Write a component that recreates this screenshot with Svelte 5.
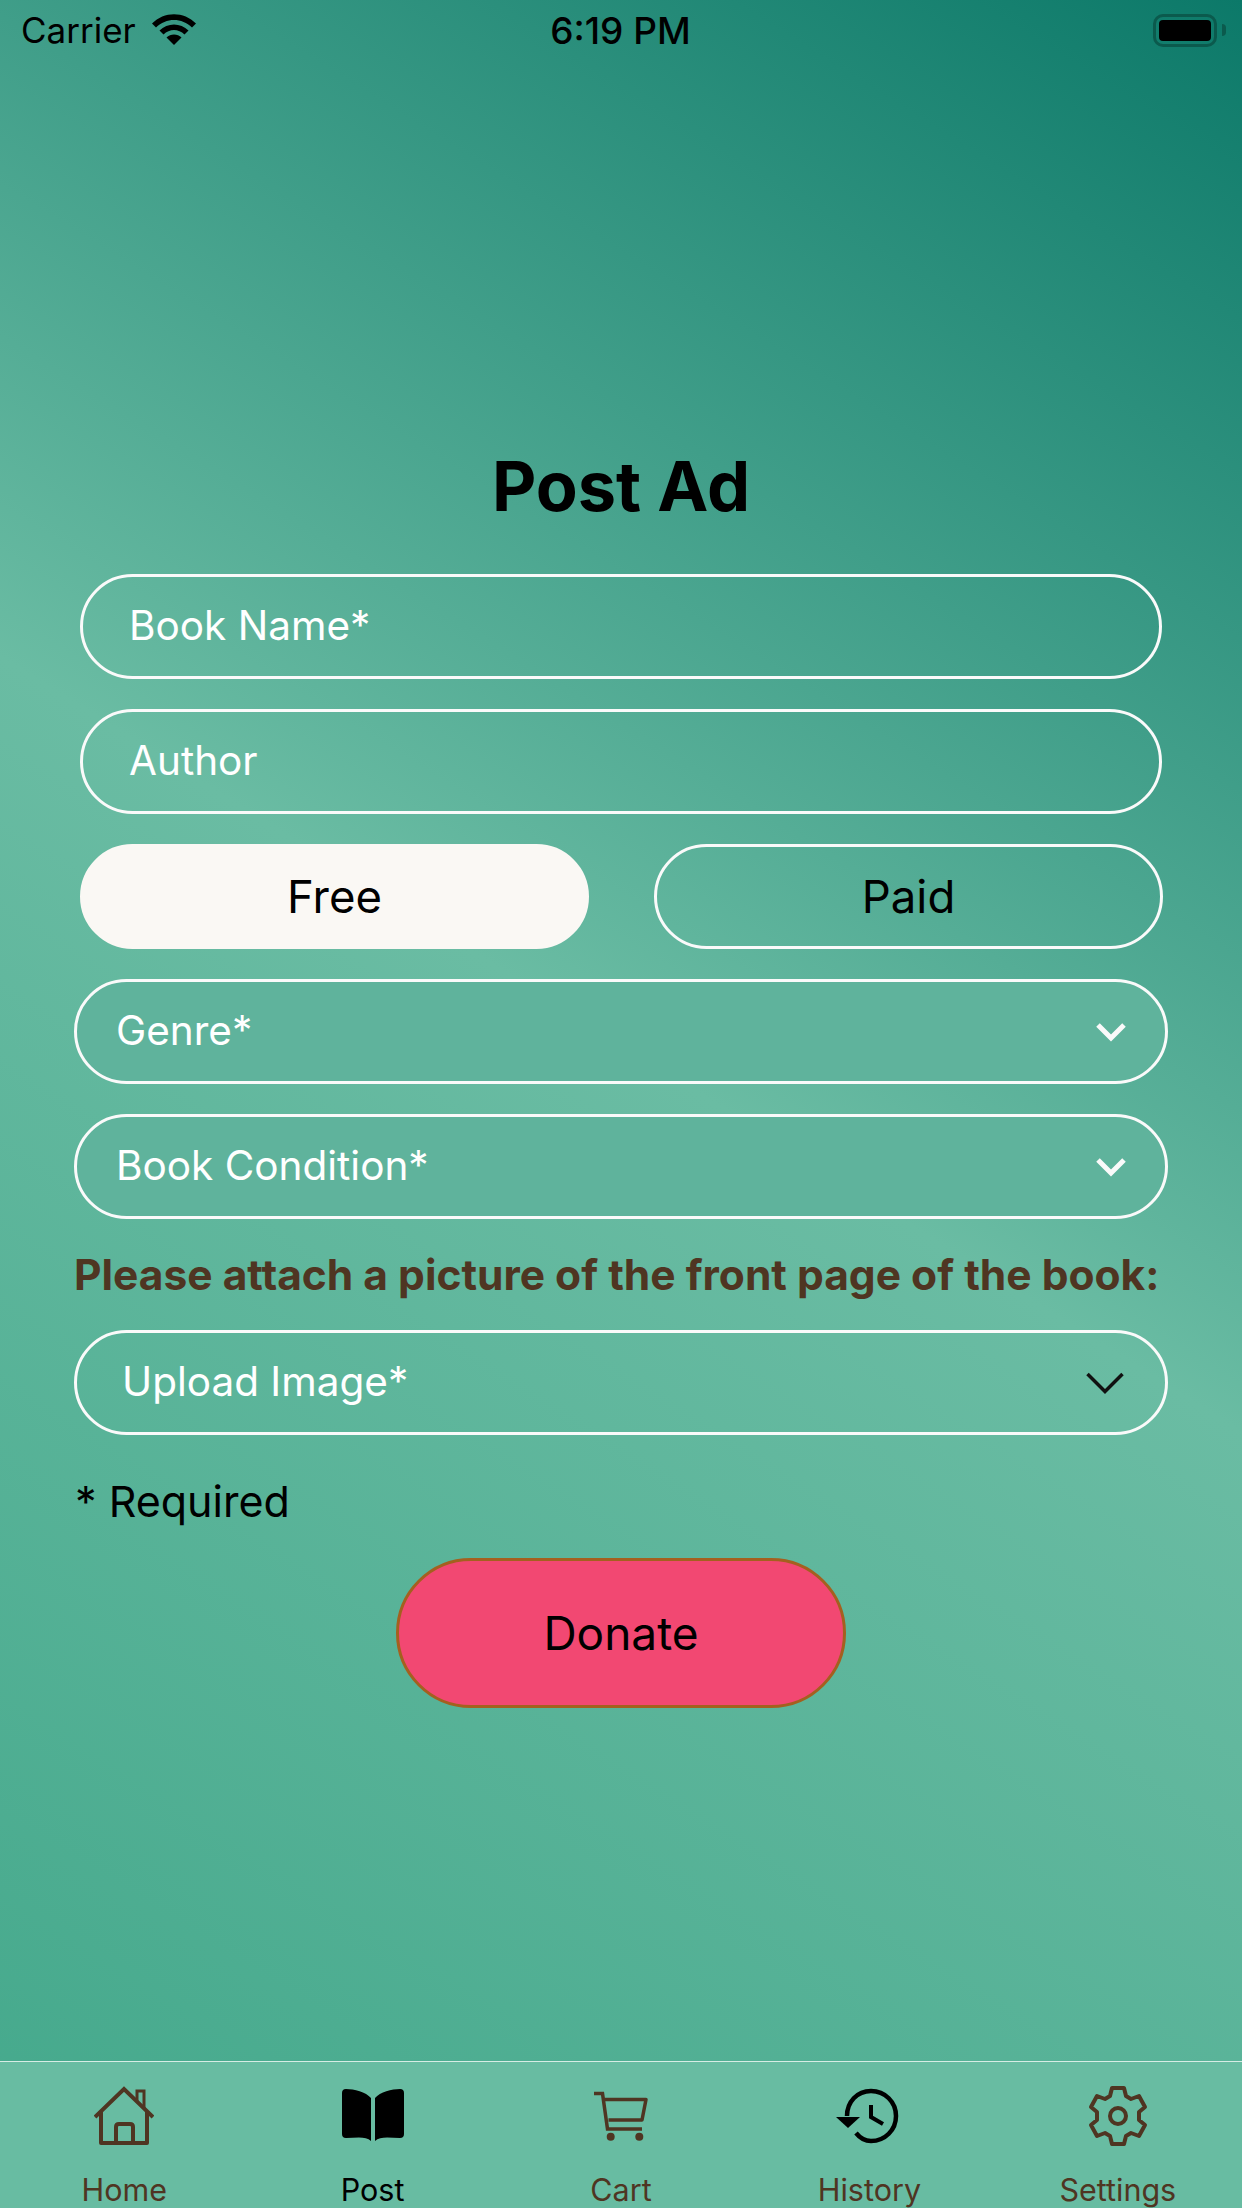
<script>
  const tabs = [
    { label: 'Home', icon: 'home' },
    { label: 'Post', icon: 'book' },
    { label: 'Cart', icon: 'cart' },
    { label: 'History', icon: 'history' },
    { label: 'Settings', icon: 'gear' },
  ];
</script>

<div class="screen">
  <header class="status">
    <div class="status-left">
      <span>Carrier</span>
      <svg class="wifi" viewBox="0 0 46 33" width="46" height="33">
        <path d="M23 32 15.500 24.500C19.500 20.500 26.500 20.500 30.500 24.500Z" fill="#000" />
        <path d="M8.500 17.500C16.500 9.500 29.500 9.500 37.500 17.500L33.500 21.500C27.500 15.500 18.500 15.500 12.500 21.500Z" fill="#000" />
        <path d="M1 10.500C13 -2 33 -2 45 10.500L41 14.500C31 4.500 15 4.500 5 14.500Z" fill="#000" />
      </svg>
    </div>
    <span class="clock">6:19 PM</span>
    <div class="battery">
      <div class="battery-body"><div class="battery-level"></div></div>
      <div class="battery-cap"></div>
    </div>
  </header>

  <main class="form">
    <h1>Post Ad</h1>

    <div class="field text-field">Book Name*</div>
    <div class="field text-field">Author</div>

    <div class="toggle">
      <button class="toggle-btn selected">Free</button>
      <button class="toggle-btn">Paid</button>
    </div>

    <div class="field select filled">
      <span>Genre*</span>
      <svg viewBox="0 0 30 20" width="30" height="20">
        <path d="M2 3 15 16 28 3" fill="none" stroke="#fafafa" stroke-width="5" />
      </svg>
    </div>
    <div class="field select filled">
      <span>Book Condition*</span>
      <svg viewBox="0 0 30 20" width="30" height="20">
        <path d="M2 3 15 16 28 3" fill="none" stroke="#fafafa" stroke-width="5" />
      </svg>
    </div>

    <p class="attach">Please attach a picture of the front page of the book:</p>

    <div class="field select upload">
      <span>Upload Image*</span>
      <svg viewBox="0 0 38 22" width="38" height="22">
        <path d="M1.500 2 19 19.500 36.500 2" fill="none" stroke="#111" stroke-width="3.500" />
      </svg>
    </div>

    <p class="required">* Required</p>

    <button class="donate">Donate</button>
  </main>

  <nav class="tabbar">
    {#each tabs as tab}
      <div class="tab">
        <div class="tab-icon">
          {#if tab.icon === 'home'}
            <svg viewBox="0 0 60 66" width="60" height="66" fill="none" stroke="#4f3522" stroke-width="4">
              <path d="M1 33 30 5 59 33" />
              <path d="M7 27V59H53V27" stroke-linejoin="round" />
              <path d="M22 59V43Q22 40 25 40H36Q39 40 39 43V59" />
              <path d="M43 17V7H50V24" stroke-width="3" />
            </svg>
          {:else if tab.icon === 'book'}
            <svg viewBox="0 0 66 66" width="66" height="66">
              <path d="M31 14C26 8 14 5 6 5Q2 5 2 9V50Q2 54 6 54C16 54 26 52 31 57Z" fill="#000" />
              <path d="M35 14C40 8 52 5 60 5Q64 5 64 9V50Q64 54 60 54C50 54 40 52 35 57Z" fill="#000" />
            </svg>
          {:else if tab.icon === 'cart'}
            <svg viewBox="0 0 66 66" width="66" height="66" fill="none" stroke="#4f3522" stroke-width="3.500">
              <path d="M6 9.500H14.500L19.500 45H54" />
              <path d="M16 15.500H58L54 36H20.500" stroke-linejoin="round" />
              <circle cx="22.700" cy="52.700" r="4" fill="#4f3522" stroke="none" />
              <circle cx="51.300" cy="52.700" r="4" fill="#4f3522" stroke="none" />
            </svg>
          {:else if tab.icon === 'history'}
            <svg viewBox="0 0 66 66" width="66" height="66" fill="none" stroke="#000" stroke-width="4.500">
              <path d="M11 32C11 18 21 7 35 7C49 7 60 18 60 32C60 46 49 57 35 57C29 57 24 54 20 49" />
              <path d="M0 33H24L12 44Z" fill="#000" stroke="none" />
              <path d="M35 21V33L47 40" stroke-width="4" />
            </svg>
          {:else}
            <svg viewBox="-3 1 66 66" width="66" height="66" fill="none" stroke="#4f3522" stroke-width="4" stroke-linejoin="round">
              <path d="M24 5H36L38 13 43 16 51 13 57 24 51 29V37L57 42 51 53 43 50 38 53 36 61H24L22 53 17 50 9 53 3 42 9 37V29L3 24 9 13 17 16 22 13Z" />
              <circle cx="30" cy="33" r="8" />
            </svg>
          {/if}
        </div>
        <span class="tab-label" class:black={tab.label === 'Post'}>{tab.label}</span>
      </div>
    {/each}
  </nav>
</div>

<style>
  :global(body) {
    margin: 0;
  }

  .screen {
    width: 1242px;
    height: 2208px;
    overflow: hidden;
    display: flex;
    flex-direction: column;
    font-family: Inter, "Liberation Sans", sans-serif;
    background: linear-gradient(32deg, #43a88b 0%, #6abca3 52%, #0c7969 100%);
  }

  .status {
    height: 60px;
    display: grid;
    grid-template-columns: 1fr auto 1fr;
    align-items: center;
    padding: 0 16px 0 21px;
    font-size: 35px;
    color: #000;
  }

  .status-left {
    display: flex;
    align-items: center;
    gap: 15px;
  }

  .wifi {
    margin-top: -1px;
  }

  .clock {
    margin-left: -6px;
    font-size: 37px;
    font-weight: 500;
  }

  .battery {
    justify-self: end;
    display: flex;
    align-items: center;
  }

  .battery-body {
    width: 64px;
    height: 33px;
    box-sizing: border-box;
    border: 3px solid #0b5a4d;
    border-radius: 10px;
    padding: 3px;
  }

  .battery-level {
    height: 100%;
    background: #000;
    border-radius: 4px;
  }

  .battery-cap {
    margin-left: 5px;
    width: 4px;
    height: 12px;
    background: #0b5a4d;
    border-radius: 0 4px 4px 0;
  }

  .form {
    flex: 1;
    display: flex;
    flex-direction: column;
    padding-top: 378px;
  }

  h1 {
    margin: 0 0 38px;
    height: 98px;
    line-height: 98px;
    font-size: 68.5px;
    font-weight: 700;
    text-align: center;
    color: #000;
  }

  .field {
    height: 105px;
    box-sizing: border-box;
    border: 3px solid #fafafa;
    border-radius: 53px;
    display: flex;
    align-items: center;
    font-size: 40.5px;
    line-height: 48px;
    color: #fff;
  }

  .field > span {
    margin-top: -2px;
  }

  .text-field {
    margin: 0 80px 30px;
    padding-left: 46px;
    padding-bottom: 1px;
  }

  .select {
    margin: 0 74px 30px;
    padding: 0 39px;
    justify-content: space-between;
  }

  .filled {
    background: #5fb39c;
  }

  .upload {
    padding: 0 41px 0 45px;
    margin-bottom: 0;
  }

  .toggle {
    margin: 0 79px 30px 80px;
    display: flex;
    justify-content: space-between;
  }

  .toggle-btn {
    width: 509px;
    height: 105px;
    box-sizing: border-box;
    border: 3px solid #fafafa;
    border-radius: 53px;
    background: transparent;
    font: inherit;
    font-size: 45.5px;
    color: #000;
  }

  .toggle-btn.selected {
    background: #faf8f4;
    border-color: #faf8f4;
  }

  .attach {
    margin: 0 0 30px 74px;
    font-size: 42.5px;
    line-height: 51px;
    font-weight: 700;
    color: #4f3522;
    white-space: nowrap;
  }

  .required {
    margin: 41px 0 0 75px;
    font-size: 43px;
    line-height: 51px;
    color: #000;
  }

  .donate {
    align-self: center;
    margin-top: 31px;
    width: 450px;
    height: 150px;
    box-sizing: border-box;
    border: 3px solid #a4601f;
    border-radius: 75px;
    background: #f24872;
    font: inherit;
    font-size: 46px;
    color: #000;
  }

  .tabbar {
    height: 147px;
    flex: none;
    box-sizing: border-box;
    border-top: 1px solid #d7ece5;
    background: #68bca2;
    display: flex;
  }

  .tab {
    flex: 1;
    display: flex;
    flex-direction: column;
    align-items: center;
    padding-top: 22px;
  }

  .tab-icon {
    height: 66px;
    display: flex;
    align-items: center;
    justify-content: center;
  }

  .tab-label {
    margin-top: 22px;
    font-size: 30.5px;
    line-height: 36px;
    color: #4f3522;
  }

  .tab-label.black {
    color: #000;
  }
</style>
